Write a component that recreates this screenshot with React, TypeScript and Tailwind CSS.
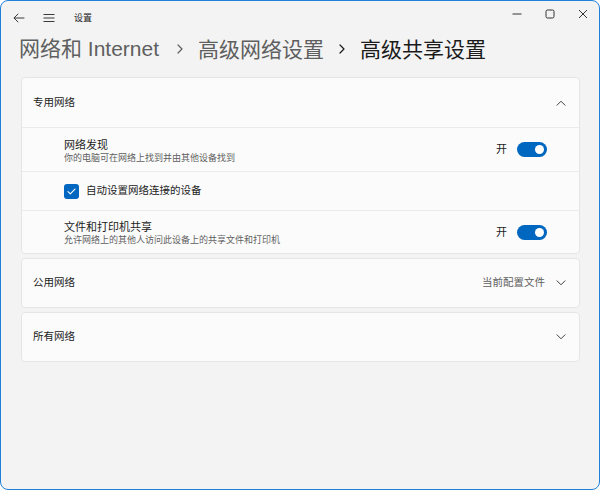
import React from "react";

const Chevron = ({ up = false }: { up?: boolean }) => (
    <svg width="10" height="6" viewBox="0 0 10 6" className="text-[#404040]">
        {up ? (
            <path d="M1 5.2 L5 1.2 L9 5.2" fill="none" stroke="currentColor" strokeWidth="1" strokeLinecap="round" strokeLinejoin="round" />
        ) : (
            <path d="M1 0.8 L5 4.8 L9 0.8" fill="none" stroke="currentColor" strokeWidth="1" strokeLinecap="round" strokeLinejoin="round" />
        )}
    </svg>
);

const Toggle = () => (
    <div className="flex items-center gap-[10px]">
        <span className="text-[11px] text-[#1b1b1b]">开</span>
        <div className="w-[30px] h-[15px] rounded-full bg-[#0067c0] flex items-center justify-end pr-[3px]">
            <div className="w-[9px] h-[9px] rounded-full bg-white"></div>
        </div>
    </div>
);

const ToggleRow = ({ title, sub, h }: { title: string; sub: string; h: string }) => (
    <div className={h + " flex items-center justify-between pl-[42px] pr-[32px] border-t border-[#ebebeb]"}>
        <div className="flex flex-col pt-[2px]">
            <span className="text-[11px] leading-[14px] text-[#1b1b1b]">{title}</span>
            <span className="text-[9px] leading-[12px] text-[#5f5f5f]">{sub}</span>
        </div>
        <Toggle />
    </div>
);

const CollapsedCard = ({ title, value }: { title: string; value?: string }) => (
    <div className="h-[50px] bg-[#fbfbfb] border border-[#e5e5e5] rounded-[4px] flex items-center justify-between pl-[11px] pr-[13px]">
        <span className="text-[10.5px] text-[#1b1b1b]">{title}</span>
        <div className="flex items-center gap-[11px]">
            {value && <span className="text-[10.5px] text-[#5f5f5f]">{value}</span>}
            <Chevron />
        </div>
    </div>
);

export default function App() {
    return (
        <div
            className="w-[600px] h-[490px] bg-[#f3f3f3] border border-[#1f80d8] rounded-[8px] overflow-hidden flex flex-col"
            style={{ fontFamily: "'Noto Sans', 'Noto Sans CJK SC', sans-serif" }}
        >
            {/* title bar */}
            <div className="h-[34px] flex items-start justify-between">
                <div className="flex items-center h-[34px] pl-[12px]">
                    <svg width="12" height="10" viewBox="0 0 12 10" className="text-[#3a3a3a]">
                        <path d="M11 5 H1.2 M5 1 L1 5 L5 9" fill="none" stroke="currentColor" strokeWidth="1" strokeLinecap="round" strokeLinejoin="round" />
                    </svg>
                    <svg width="12" height="10" viewBox="0 0 12 10" className="ml-[18px] text-[#3a3a3a]">
                        <path d="M0.5 1.5 H11.5 M0.5 5 H11.5 M0.5 8.5 H11.5" fill="none" stroke="currentColor" strokeWidth="1" />
                    </svg>
                    <span className="ml-[19px] text-[9px] text-[#1b1b1b]">设置</span>
                </div>
                <div className="flex h-[26px]">
                    <div className="w-[33px] flex items-center justify-center">
                        <svg width="10" height="10" viewBox="0 0 10 10"><path d="M0.5 5 H9.5" stroke="#333" strokeWidth="1" /></svg>
                    </div>
                    <div className="w-[33px] flex items-center justify-center">
                        <svg width="10" height="10" viewBox="0 0 10 10"><rect x="1" y="1" width="8" height="8" rx="1.5" fill="none" stroke="#333" strokeWidth="1" /></svg>
                    </div>
                    <div className="w-[33px] flex items-center justify-center">
                        <svg width="10" height="10" viewBox="0 0 10 10"><path d="M1 1 L9 9 M9 1 L1 9" stroke="#333" strokeWidth="1" /></svg>
                    </div>
                </div>
            </div>

            {/* breadcrumb */}
            <div className="flex items-center h-[28px] pl-[18px] text-[21px] leading-[28px]">
                <span className="text-[#5f5f5f]" style={{ fontFamily: "'Liberation Sans', 'Noto Sans CJK SC', sans-serif" }}>网络和 Internet</span>
                <svg width="8" height="10" viewBox="0 0 8 10" className="ml-[17px] mr-[14px] text-[#5f5f5f]">
                    <path d="M2 1 L6 5 L2 9" fill="none" stroke="currentColor" strokeWidth="1.2" strokeLinecap="round" strokeLinejoin="round" />
                </svg>
                <span className="text-[#5f5f5f]">高级网络设置</span>
                <svg width="8" height="10" viewBox="0 0 8 10" className="ml-[14px] mr-[14px] text-[#1b1b1b]">
                    <path d="M2 1 L6 5 L2 9" fill="none" stroke="currentColor" strokeWidth="1.2" strokeLinecap="round" strokeLinejoin="round" />
                </svg>
                <span className="text-[#1b1b1b]">高级共享设置</span>
            </div>

            {/* content */}
            <div className="flex flex-col gap-[4px] pl-[20px] pr-[19px] mt-[14px]">
                <div className="bg-[#fbfbfb] border border-[#e5e5e5] rounded-[4px] flex flex-col">
                    <div className="h-[49px] flex items-center justify-between pl-[11px] pr-[13px]">
                        <span className="text-[10.5px] text-[#1b1b1b]">专用网络</span>
                        <Chevron up />
                    </div>
                    <ToggleRow h="h-[44px]" title="网络发现" sub="你的电脑可在网络上找到并由其他设备找到" />
                    <div className="h-[39px] flex items-center pl-[42px] border-t border-[#ebebeb]">
                        <div className="w-[15px] h-[15px] rounded-[3px] bg-[#0067c0] flex items-center justify-center">
                            <svg width="9" height="7" viewBox="0 0 9 7">
                                <path d="M1 3.6 L3.3 5.9 L8 1.2" fill="none" stroke="white" strokeWidth="1.1" strokeLinecap="round" strokeLinejoin="round" />
                            </svg>
                        </div>
                        <span className="ml-[7px] text-[10.5px] text-[#1b1b1b]">自动设置网络连接的设备</span>
                    </div>
                    <ToggleRow h="h-[43px]" title="文件和打印机共享" sub="允许网络上的其他人访问此设备上的共享文件和打印机" />
                </div>
                <CollapsedCard title="公用网络" value="当前配置文件" />
                <CollapsedCard title="所有网络" />
            </div>
        </div>
    );
}
